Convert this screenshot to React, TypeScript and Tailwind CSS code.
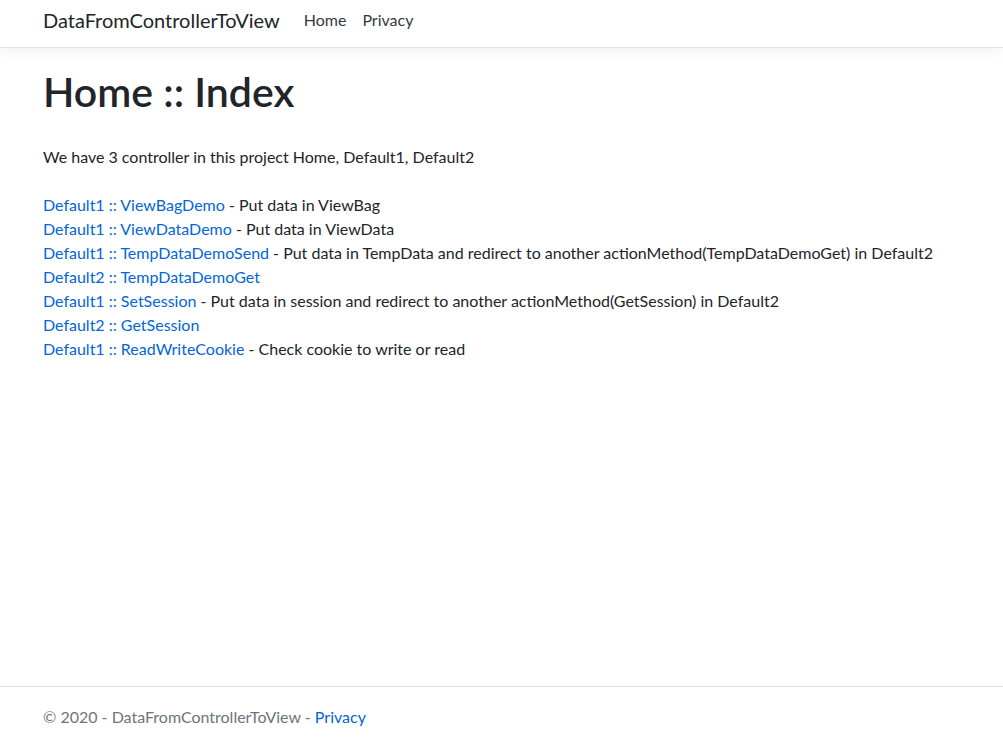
export default function App() {
  const links: { ctrl: string; action: string; desc?: string }[] = [
    { ctrl: "Default1", action: "ViewBagDemo", desc: "Put data in ViewBag" },
    { ctrl: "Default1", action: "ViewDataDemo", desc: "Put data in ViewData" },
    {
      ctrl: "Default1",
      action: "TempDataDemoSend",
      desc: "Put data in TempData and redirect to another actionMethod(TempDataDemoGet) in Default2",
    },
    { ctrl: "Default2", action: "TempDataDemoGet" },
    {
      ctrl: "Default1",
      action: "SetSession",
      desc: "Put data in session and redirect to another actionMethod(GetSession) in Default2",
    },
    { ctrl: "Default2", action: "GetSession" },
    { ctrl: "Default1", action: "ReadWriteCookie", desc: "Check cookie to write or read" },
  ];
  return (
    <div className="h-[740px] overflow-hidden flex flex-col bg-white text-[#212529] font-['Lato',_'Open_Sans',_sans-serif] text-[16px] leading-6">
      <header className="h-[48px] shrink-0 border-b border-[#e5e5e5] bg-white shadow-[0_4px_12px_rgba(0,0,0,0.05)] relative z-10">
        <nav className="flex items-start px-[43px] pt-[5px]">
          <a href="#" className="text-[20px] leading-[30px] text-[#212529] mr-[16px]">
            DataFromControllerToView
          </a>
          <ul className="flex pt-[3px]">
            <li>
              <a href="#" className="block px-[8px] text-[#343a40]">Home</a>
            </li>
            <li>
              <a href="#" className="block px-[8px] text-[#343a40]">Privacy</a>
            </li>
          </ul>
        </nav>
      </header>
      <main className="h-[638px] shrink-0 px-[43px] pt-[20px]">
        <h1 className="text-[41px] leading-[48px] font-semibold text-[#212529]">Home :: Index</h1>
        <p className="mt-[29px]">We have 3 controller in this project Home, Default1, Default2</p>
        <div className="mt-[24px] flex flex-col">
          {links.map((l) => (
            <div key={l.action} className="whitespace-nowrap">
              <a href="#" className="text-[#0366d6]">
                {l.ctrl} :: {l.action}
              </a>
              {l.desc ? <span> - {l.desc}</span> : null}
            </div>
          ))}
        </div>
      </main>
      <footer className="h-[60px] shrink-0 border-t border-[#dee2e6] px-[43px] leading-[60px] text-[#6c757d]">
        © 2020 - DataFromControllerToView - <a href="#" className="text-[#0366d6]">Privacy</a>
      </footer>
    </div>
  );
}
